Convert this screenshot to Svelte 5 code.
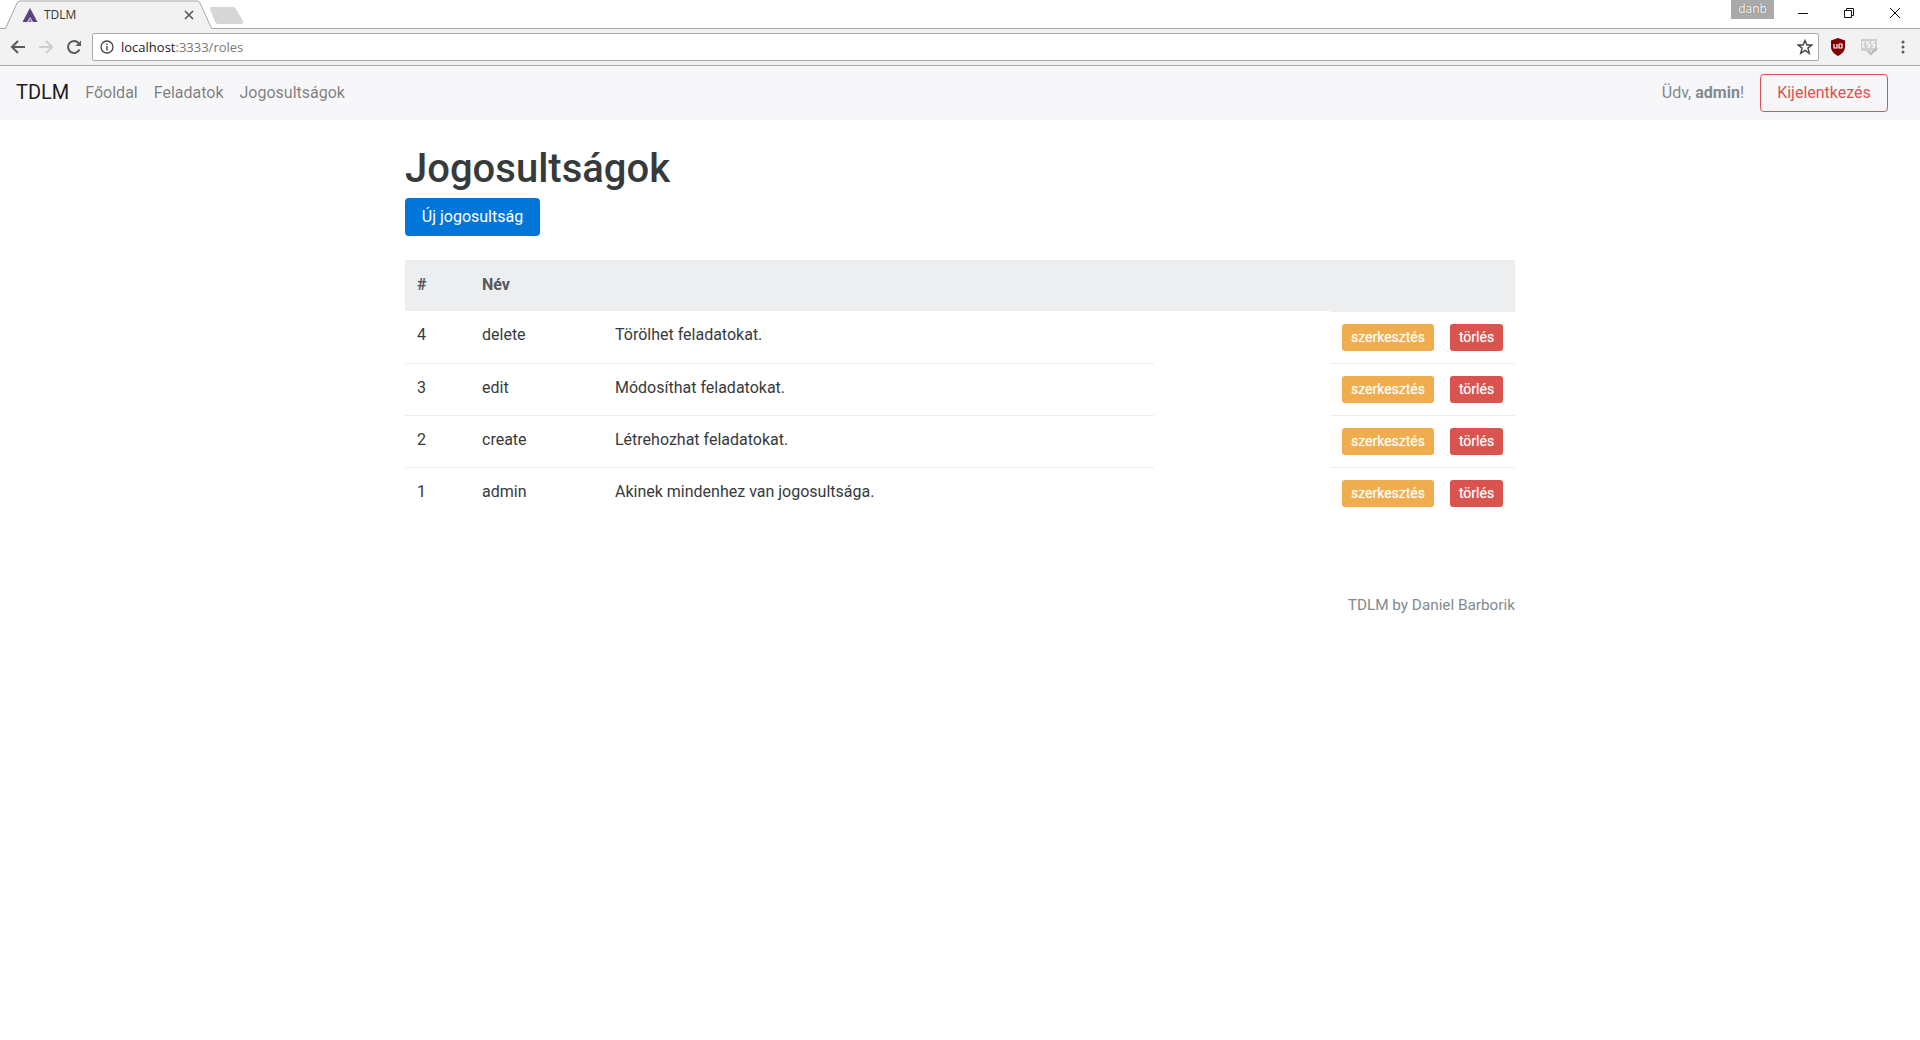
<script lang="ts">
	const roles = [
		{ id: 4, name: 'delete', description: 'Törölhet feladatokat.' },
		{ id: 3, name: 'edit', description: 'Módosíthat feladatokat.' },
		{ id: 2, name: 'create', description: 'Létrehozhat feladatokat.' },
		{ id: 1, name: 'admin', description: 'Akinek mindenhez van jogosultsága.' }
	];
</script>

<div class="browser">
	<div class="tabstrip">
		<div class="tab">
			<svg class="tab-shape" width="214" height="29" viewBox="0 0 214 29">
				<path d="M0 28H5L17 3Q18 1 20 1H197Q199 1 200 3L211 28H214V29H0Z" fill="#f2f2f2" />
				<path d="M0 28.500H5.500L17 3Q18 1 20 1H197Q199 1 200 3L211.500 28.500H214" fill="none" stroke="#a8a8a8" />
			</svg>
			<svg class="favicon" width="16" height="16" viewBox="0 0 16 16">
				<path d="M8 1 15.500 15H11L8 10 5 15H.5Z" fill="#5b4180" />
				<path d="M8 11 10 15H6Z" fill="#8a78a6" />
			</svg>
			<span class="tab-title">TDLM</span>
			<svg class="tab-close" width="10" height="10" viewBox="0 0 10 10">
				<path d="M1 1 9 9M9 1 1 9" stroke="#555" stroke-width="1.600" />
			</svg>
		</div>
		<svg class="new-tab" width="36" height="19" viewBox="0 0 36 19">
			<path d="M2 1H24Q26 1 27 3L34 15Q35 18 32 18H9Q7 18 6 16L1 3Q1 1 2 1Z" fill="#d6d6d6" />
		</svg>
		<div class="spacer"></div>
		<span class="profile">danb</span>
		<div class="window-controls">
			<svg width="12" height="12" viewBox="0 0 12 12"><path d="M1 6.500H11" stroke="#111" /></svg>
			<svg width="12" height="12" viewBox="0 0 12 12">
				<path d="M1.500 3.500H8.500V10.500H1.500ZM3.500 3.500V1.500H10.500V8.500H8.500" fill="none" stroke="#111" />
			</svg>
			<svg width="12" height="12" viewBox="0 0 12 12"><path d="M1 1 11 11M11 1 1 11" stroke="#111" /></svg>
		</div>
	</div>
	<div class="toolbar">
		<div class="nav-icons">
			<svg width="16" height="16" viewBox="0 0 16 16">
				<path d="M15 8H2M8 2 2 8 8 14" fill="none" stroke="#5a5a5a" stroke-width="2" />
			</svg>
			<svg width="16" height="16" viewBox="0 0 16 16">
				<path d="M1 8H14M8 2 14 8 8 14" fill="none" stroke="#cfcfcf" stroke-width="2" />
			</svg>
			<svg width="16" height="16" viewBox="0 0 16 16">
				<path d="M13.500 10.500A6 6 0 1 1 12.500 4" fill="none" stroke="#5a5a5a" stroke-width="2" />
				<path d="M9.500 7H15V1.500Z" fill="#5a5a5a" />
			</svg>
		</div>
		<div class="omnibox">
			<svg width="14" height="14" viewBox="0 0 14 14">
				<circle cx="7" cy="7" r="6" fill="none" stroke="#444" stroke-width="1.300" />
				<path d="M7 6V10.500M7 3.500V5" stroke="#444" stroke-width="1.400" />
			</svg>
			<span class="url"><span class="host">localhost</span>:3333/roles</span>
			<svg width="16" height="16" viewBox="0 0 16 16">
				<path d="M8 1.500 9.900 6H14.800L10.900 9.100 12.300 14.300 8 11.400 3.700 14.300 5.100 9.100 1.200 6H6.100Z" fill="none" stroke="#444" stroke-width="1.400" />
			</svg>
		</div>
		<svg class="ext-ublock" width="16" height="18" viewBox="0 0 16 18">
			<path d="M8 0 15 2.500V9C15 13 12 16 8 18 4 16 1 13 1 9V2.500Z" fill="#800000" />
			<path d="M4 6V10H7V6M9 6V10H12V6H9" fill="none" stroke="#fff" stroke-width="1.200" />
		</svg>
		<svg class="ext-css" width="18" height="17" viewBox="0 0 18 17">
			<rect x="0" y="0" width="16" height="12" fill="#cfcfcf" />
			<path d="M4 3H2V8H4M9 3H6V5.500H8.500V8H6M14 3H11V5.500H13.500V8H11" fill="none" stroke="#fff" stroke-width="1.100" />
			<path d="M7 12 10 15 16 9" fill="none" stroke="#b8b8b8" stroke-width="2" />
		</svg>
		<svg class="menu" width="4" height="14" viewBox="0 0 4 14">
			<circle cx="2" cy="2" r="1.500" fill="#5a5a5a" />
			<circle cx="2" cy="7" r="1.500" fill="#5a5a5a" />
			<circle cx="2" cy="12" r="1.500" fill="#5a5a5a" />
		</svg>
	</div>
</div>

<nav class="navbar">
	<a class="brand" href="#home">TDLM</a>
	<a class="nav-link" href="#home">Főoldal</a>
	<a class="nav-link" href="#tasks">Feladatok</a>
	<a class="nav-link" href="#roles">Jogosultságok</a>
	<div class="spacer"></div>
	<span class="welcome">Üdv, <strong>admin</strong>!</span>
	<button class="btn-logout">Kijelentkezés</button>
</nav>

<main class="container">
	<h1>Jogosultságok</h1>
	<button class="btn-new">Új jogosultság</button>

	<table>
		<colgroup>
			<col class="col-id" />
			<col class="col-name" />
			<col class="col-desc" />
			<col class="col-gap" />
			<col class="col-actions" />
		</colgroup>
		<thead>
			<tr>
				<th>#</th>
				<th>Név</th>
				<th></th>
				<th></th>
				<th></th>
			</tr>
		</thead>
		<tbody>
			{#each roles as role}
				<tr>
					<td>{role.id}</td>
					<td>{role.name}</td>
					<td>{role.description}</td>
					<td class="gap"></td>
					<td class="actions">
						<div class="action-buttons">
							<button class="btn-sm btn-edit">szerkesztés</button>
							<button class="btn-sm btn-delete">törlés</button>
						</div>
					</td>
				</tr>
			{/each}
		</tbody>
	</table>

	<footer>TDLM by Daniel Barborik</footer>
</main>

<style>
	:global(body) {
		margin: 0;
		background: #fff;
		color: #373a3c;
		font-family: Roboto, 'Liberation Sans', sans-serif;
		font-size: 16px;
	}

	a {
		text-decoration: none;
	}

	button {
		font-family: inherit;
		cursor: pointer;
	}

	.spacer {
		flex: 1;
	}

	.tabstrip {
		display: flex;
		height: 28px;
		border-bottom: 1px solid #a8a8a8;
		background: #fff;
	}

	.tab {
		position: relative;
		display: flex;
		align-items: center;
		width: 214px;
		height: 29px;
		padding: 0 0 0 22px;
		box-sizing: border-box;
		font-size: 12px;
		color: #333;
	}

	.tab-shape {
		position: absolute;
		left: 0;
		top: 0;
	}

	.favicon,
	.tab-title,
	.tab-close {
		position: relative;
	}

	.tab-title {
		margin-left: 6px;
		flex: 1;
		font-family: 'Open Sans', Roboto, sans-serif;
	}

	.tab-close {
		margin-right: 20px;
	}

	.new-tab {
		margin: 6px 0 0 -5px;
	}

	.profile {
		width: 43px;
		height: 19px;
		line-height: 17px;
		background: #aaa;
		color: #fff;
		font-size: 12px;
		text-align: center;
		font-family: 'Open Sans', sans-serif;
		text-shadow: 0 0 1px #555;
	}

	.window-controls {
		display: flex;
		align-items: center;
		gap: 34px;
		height: 26px;
		margin: 0 19px 0 23px;
	}

	.toolbar {
		display: flex;
		align-items: center;
		height: 37px;
		box-sizing: border-box;
		padding: 0 15px 0 10px;
		background: #f2f2f2;
		border-bottom: 1px solid #a8a8a8;
	}

	.nav-icons {
		display: flex;
		gap: 12px;
		margin-right: 10px;
	}

	.omnibox {
		display: flex;
		align-items: center;
		flex: 1;
		height: 28px;
		padding: 0 5px 0 7px;
		box-sizing: border-box;
		background: #fff;
		border: 1px solid #aaa;
		border-radius: 2px;
	}

	.url {
		flex: 1;
		margin-left: 7px;
		color: #777;
		font-family: 'Open Sans', Roboto, sans-serif;
		font-size: 13px;
	}

	.host {
		color: #222;
	}

	.ext-ublock {
		margin-left: 11px;
	}

	.ext-css {
		margin-left: 15px;
	}

	.menu {
		margin-left: 22px;
	}

	.navbar {
		display: flex;
		align-items: center;
		height: 54px;
		padding: 0 32px 0 16px;
		background: #f7f7f9;
	}

	.brand {
		margin: 0 16px 2px 0;
		font-size: 20px;
		color: rgba(0, 0, 0, 0.9);
	}

	.nav-link {
		margin: 0 16px 2px 0;
		color: rgba(0, 0, 0, 0.5);
	}

	.welcome {
		margin-bottom: 2px;
		color: #818a91;
	}

	.btn-logout {
		height: 38px;
		width: 128px;
		margin-left: 16px;
		padding: 0 0 2px;
		font-size: 16px;
		color: #d9534f;
		background: transparent;
		border: 1px solid #d9534f;
		border-radius: 4px;
	}

	.container {
		width: 1110px;
		margin: 0 auto 0 405px;
	}

	h1 {
		margin: 0;
		padding-top: 25px;
		height: 53px;
		font-size: 40px;
		font-weight: 500;
		line-height: 48px;
		color: #373a3c;
	}

	.btn-new {
		display: block;
		width: 135px;
		height: 38px;
		padding: 0 0 2px;
		font-size: 16px;
		color: #fff;
		background: #0275d8;
		border: 0;
		border-radius: 4px;
	}

	table {
		width: 1110px;
		margin-top: 24px;
		table-layout: fixed;
		border-collapse: separate;
		border-spacing: 0;
	}

	.col-id {
		width: 65px;
	}

	.col-name {
		width: 133px;
	}

	.col-desc {
		width: 551px;
	}

	.col-gap {
		width: 176px;
	}

	.col-actions {
		width: 185px;
	}

	th {
		height: 52px;
		padding: 0 12px 4px;
		box-sizing: border-box;
		background: #eceeef;
		text-align: left;
		font-weight: 700;
		color: #55595c;
		font-size: 16px;
	}

	td {
		height: 52px;
		padding: 12px 12px 0;
		box-sizing: border-box;
		vertical-align: top;
		line-height: 24px;
		border-bottom: 1px solid #eceeef;
	}

	/* the header is a pixel shorter over everything but the actions column */
	tbody tr:first-child td:not(.actions) {
		padding-top: 11px;
		box-shadow: 0 -1px 0 #fff;
	}

	tbody tr:last-child td {
		border-bottom: 0;
	}

	td.gap {
		border-bottom: 0;
	}

	.action-buttons {
		display: flex;
		gap: 16px;
	}

	.btn-sm {
		height: 27px;
		padding: 0 0 2px;
		font-size: 14px;
		color: #fff;
		text-shadow: 0 0 1px rgba(255, 255, 255, 0.5);
		border: 0;
		border-radius: 3px;
	}

	.btn-edit {
		width: 92px;
		background: #f0ad4e;
	}

	.btn-delete {
		width: 53px;
		background: #d9534f;
	}

	footer {
		margin-top: 73px;
		text-align: right;
		color: #818a91;
		font-size: 15.300px;
		line-height: 24px;
	}
</style>
